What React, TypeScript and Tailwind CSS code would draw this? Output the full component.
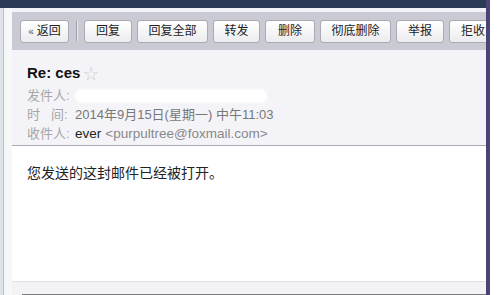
import React from "react";

const font = { fontFamily: '"Liberation Sans", "Noto Sans CJK SC", sans-serif' };

function Btn({ label, w }: { label: string; w: number }) {
  return (
    <div
      className="h-[23px] shrink-0 flex items-center justify-center rounded-[3px] border border-[#a9aab3] bg-gradient-to-b from-white to-[#ececef] text-[12px] text-[#222] shadow-[inset_0_1px_0_#fff]"
      style={{ width: w }}
    >
      {label}
    </div>
  );
}

export default function App() {
  return (
    <div className="w-[502px] h-[295px] bg-white flex overflow-hidden" style={font}>
      <div className="w-[486px] h-full flex flex-col">
        <div className="h-[8px] bg-[#2c3a56] shrink-0" />
        <div className="flex flex-1 min-h-0">
          <div className="w-[4px] bg-[#dde3e9] border-r border-[#b9c0c8] shrink-0" />
          <div className="w-[8px] bg-[#f6f7f9] shrink-0" />
          <div className="flex-1 flex flex-col min-w-0">
            <div className="h-[4px] bg-[#f2f3f6] shrink-0" />
            <div className="h-[38px] bg-[#cacad5] flex items-center pl-[8px] shrink-0">
              <div className="h-[23px] w-[49px] shrink-0 flex items-center justify-center gap-[3px] rounded-[3px] border border-[#a9aab3] bg-gradient-to-b from-white to-[#ececef] text-[12px] text-[#222]">
                <span className="text-[10px] text-[#555]">«</span>
                <span>返回</span>
              </div>
              <div className="w-[2px] h-[20px] ml-[7px] mr-[6px] border-l border-[#9d9ea8] border-r border-r-[#e8e8ee]" />
              <div className="flex gap-[5px]">
                <Btn label="回复" w={48} />
                <Btn label="回复全部" w={71} />
                <Btn label="转发" w={47} />
                <Btn label="删除" w={50} />
                <Btn label="彻底删除" w={71} />
                <Btn label="举报" w={48} />
                <Btn label="拒收" w={48} />
              </div>
            </div>
            <div className="h-[96px] bg-[#f4f4f8] border-b border-[#a9a9b2] shrink-0 pl-[15px] pt-[13px]">
              <div className="flex items-center gap-[3px] h-[20px]">
                <span className="text-[15px] font-bold text-[#111]">Re: ces</span>
                <span className="text-[15px] text-[#d0d0d0] leading-none">☆</span>
              </div>
              <div className="mt-[4px] flex flex-col gap-[1px] text-[13px] leading-[18px]">
                <div className="flex items-center">
                  <span className="text-[#a6a6a6] w-[48px]">发件人:</span>
                  <span className="h-[14px] w-[192px] rounded-[7px] bg-white blur-[1px]" />
                </div>
                <div className="flex items-center">
                  <span className="text-[#a6a6a6] w-[48px] flex">
                    <span className="w-[24px]">时</span>
                    <span>间:</span>
                  </span>
                  <span className="text-[#777]">2014年9月15日(星期一) 中午11:03</span>
                </div>
                <div className="flex items-center">
                  <span className="text-[#a6a6a6] w-[48px]">收件人:</span>
                  <span className="text-[#222] font-medium text-[13.5px]">ever</span>
                  <span className="text-[#888] ml-[4px] text-[13.5px]">&lt;purpultree@foxmail.com&gt;</span>
                </div>
              </div>
            </div>
            <div className="h-[135px] bg-white shrink-0 pl-[15px] pt-[17px] text-[14px] text-[#222]">
              您发送的这封邮件已经被打开。
            </div>
            <div className="flex-1 bg-[#f3f3f6] border-t border-[#e0e0e5] flex flex-col justify-end">
              <div className="h-[1px] ml-[10px] bg-[#7a7a80]" />
            </div>
          </div>
        </div>
      </div>
      <div className="w-[4px] h-full bg-[#4a4475] shrink-0" />
      <div className="flex-1 bg-white" />
    </div>
  );
}
